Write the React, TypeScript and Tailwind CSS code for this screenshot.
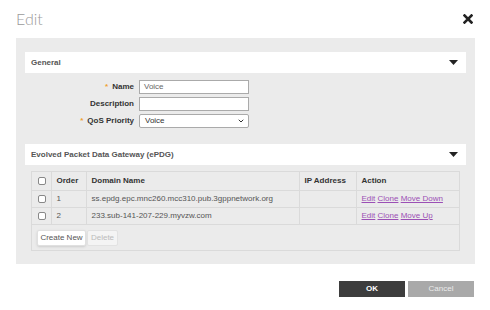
import { ChevronDown } from "lucide-react";

const rows = [
  { order: 1, domain: "ss.epdg.epc.mnc260.mcc310.pub.3gppnetwork.org", move: "Move Down" },
  { order: 2, domain: "233.sub-141-207-229.myvzw.com", move: "Move Up" },
];

function Caret() {
  return (
    <svg width="9" height="5" viewBox="0 0 9 5" className="text-[#222]">
      <path d="M0 0h9L4.5 5z" fill="currentColor" />
    </svg>
  );
}

function SectionHeader({ title }: { title: string }) {
  return (
    <div className="flex h-[21px] items-center justify-between bg-white pl-[6px] pr-[8px]">
      <span className="text-[8px] font-bold text-[#555]">{title}</span>
      <Caret />
    </div>
  );
}

function Box() {
  return <span className="block h-[8px] w-[8px] rounded-[2px] border border-[#888] bg-white" />;
}

function Field({ label, required, children }: { label: string; required?: boolean; children: React.ReactNode }) {
  return (
    <div className="flex items-center">
      <div className="w-[114px] pr-[5px] text-right text-[8px] font-bold text-[#333]">
        {required && <span className="mr-[4px] text-[#f0a030]">*</span>}
        {label}
      </div>
      {children}
    </div>
  );
}

export default function App() {
  return (
    <div className="h-[310px] w-[490px] bg-white font-['Liberation_Sans',Arial,sans-serif]">
      <div className="flex h-[38px] items-center justify-between pl-[16px] pr-[17px]">
        <span className="font-['Lato',sans-serif] text-[16px] font-light text-[#9a9a9a]">Edit</span>
        <svg width="10" height="10" viewBox="0 0 10 10">
          <path d="M1.5 1.5l7 7M8.5 1.5l-7 7" stroke="#222" strokeWidth="2.6" strokeLinecap="square" />
        </svg>
      </div>

      <div className="ml-[16px] w-[459px] bg-[#ebebeb] px-[9px] pb-[13px] pt-[14px]">
        <SectionHeader title="General" />

        <div className="flex flex-col gap-[3px] pb-[16px] pt-[7px]">
          <Field label="Name" required>
            <div className="flex h-[14px] w-[110px] items-center border border-[#aaa] bg-white px-[4px] text-[8px] text-[#666]">
              Voice
            </div>
          </Field>
          <Field label="Description">
            <div className="h-[14px] w-[110px] border border-[#aaa] bg-white" />
          </Field>
          <Field label="QoS Priority" required>
            <div className="flex h-[14px] w-[110px] items-center justify-between rounded-[2px] border border-[#aaa] bg-white pl-[5px] pr-[3px] text-[8px] text-[#333]">
              Voice
              <ChevronDown className="h-[8px] w-[8px]" strokeWidth={3} />
            </div>
          </Field>
        </div>

        <SectionHeader title="Evolved Packet Data Gateway (ePDG)" />

        <div className="px-[6px] pt-[6px]">
          <div className="border border-[#dadada] text-[8px] text-[#555]">
            <table className="w-full border-collapse">
              <thead>
                <tr className="h-[18px] border-b border-[#dadada] font-bold text-[#333]">
                  <th className="w-[19px] border-r border-[#dadada] pl-[6px]"><Box /></th>
                  <th className="w-[35px] border-r border-[#dadada] pl-[5px] text-left">Order</th>
                  <th className="w-[213px] border-r border-[#dadada] pl-[5px] text-left">Domain Name</th>
                  <th className="w-[57px] border-r border-[#dadada] pl-[5px] text-left">IP Address</th>
                  <th className="pl-[5px] text-left">Action</th>
                </tr>
              </thead>
              <tbody>
                {rows.map((r) => (
                  <tr key={r.order} className="h-[17px] border-b border-[#dadada]">
                    <td className="border-r border-[#dadada] pl-[6px]"><Box /></td>
                    <td className="border-r border-[#dadada] pl-[5px]">{r.order}</td>
                    <td className="border-r border-[#dadada] pl-[5px]">{r.domain}</td>
                    <td className="border-r border-[#dadada]" />
                    <td className="pl-[5px] text-[#9b4fb5]">
                      <span className="underline">Edit</span> <span className="underline">Clone</span>{" "}
                      <span className="underline">{r.move}</span>
                    </td>
                  </tr>
                ))}
              </tbody>
            </table>
            <div className="flex gap-[1px] px-[5px] pb-[4px] pt-[5px]">
              <button className="h-[16px] w-[49px] rounded-[2px] border border-[#e0e0e0] bg-white text-[8px] text-[#555] shadow-sm">
                Create New
              </button>
              <button className="h-[16px] w-[31px] rounded-[2px] border border-[#e2e2e2] bg-[#f4f4f4] text-[8px] text-[#bbb]">
                Delete
              </button>
            </div>
          </div>
        </div>
      </div>

      <div className="flex justify-end gap-[3px] pr-[16px] pt-[17px]">
        <button className="h-[16px] w-[66px] bg-[#3d3d3d] text-[8px] font-bold text-white">OK</button>
        <button className="h-[16px] w-[66px] bg-[#a9a9a9] text-[8px] text-[#ececec]">Cancel</button>
      </div>
    </div>
  );
}
